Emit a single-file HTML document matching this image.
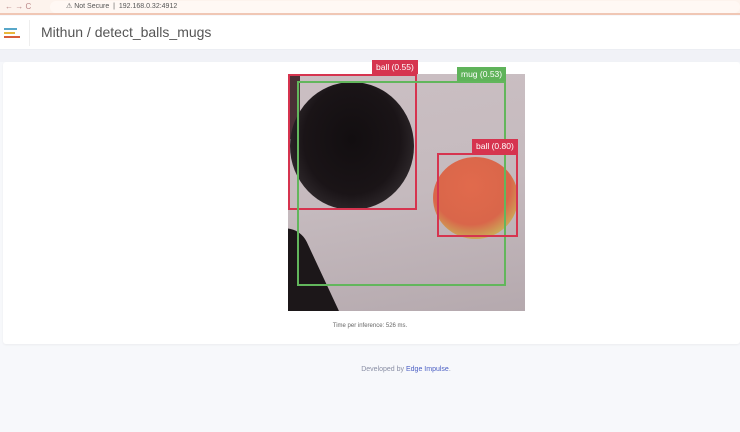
<!DOCTYPE html>
<html><head><meta charset="utf-8"><style>
*{margin:0;padding:0;box-sizing:border-box}
body{width:740px;height:432px;overflow:hidden;background:#f7f8fb;font-family:"Liberation Sans",sans-serif;position:relative}
.bar{position:absolute;left:0;top:0;width:740px;height:15px;background:#fdf3ed;border-bottom:2px solid #f0c7b5}
.url{position:absolute;left:50px;top:1px;height:12px;width:690px;background:#fff8f4;border-radius:6px;font-size:7px;color:#555;line-height:12px;padding-left:16px}
.hdr{position:absolute;left:0;top:16px;width:740px;height:34px;background:#fff;border-bottom:1px solid #eceef3}
.title{position:absolute;left:41px;top:8px;font-size:14px;color:#555}
.band{position:absolute;left:0;top:50px;width:740px;height:12px;background:#f1f2f7}
.card{position:absolute;left:3px;top:62px;width:737px;height:282px;background:#fff;border-radius:3px;box-shadow:0 1px 2px rgba(0,0,0,.05)}
.img{position:absolute;left:288px;top:74px;width:237px;height:237px;overflow:hidden;
background:linear-gradient(170deg,#cbbfc3 0%,#c5babe 50%,#b5a9ae 100%)}
.lbl{position:absolute;color:#fff;font-size:8.5px;line-height:14px;padding:0 4px;white-space:nowrap}
</style></head><body>
<div class="bar"><span style="position:absolute;left:5px;top:2px;font-size:8px;color:#b88">← → C</span><div class="url">⚠ Not Secure &nbsp;|&nbsp; 192.168.0.32:4912</div></div>
<div class="hdr">
 <div style="position:absolute;left:4px;top:12px;width:13px;height:2px;background:#58a7c9"></div>
 <div style="position:absolute;left:4px;top:16px;width:11px;height:2px;background:#e8b73c"></div>
 <div style="position:absolute;left:4px;top:20px;width:16px;height:2px;background:#d85d3a"></div>
 <div style="position:absolute;left:29px;top:4px;width:1px;height:26px;background:#eee"></div>
 <div class="title">Mithun / detect_balls_mugs</div>
</div>
<div class="band"></div>
<div class="card"></div>
<div class="img">
 <div style="position:absolute;left:-10px;top:-5px;width:22px;height:70px;background:#4a3036"></div>
 <div style="position:absolute;left:2px;top:8px;width:124px;height:128px;border-radius:50%;background:radial-gradient(ellipse at 50% 45%,#120e10 0%,#1a1417 55%,#2e282b 75%,#6b6367 90%,#a39a9e 100%)"></div>
 <div style="position:absolute;left:-30px;top:155px;width:65px;height:110px;border-radius:6px 24px 6px 6px;background:#1c1719;transform:rotate(-25deg)"></div>
 <div style="position:absolute;left:145px;top:83px;width:85px;height:82px;border-radius:50%;background:radial-gradient(circle at 45% 35%,#e16a4c 0%,#d9664a 55%,#c9b75a 80%,#b8b060 100%)"></div>
</div>
<div style="position:absolute;left:288px;top:74px;width:129px;height:136px;border:2px solid #d6344f"></div>
<div class="lbl" style="left:372px;top:60px;background:#d6344f">ball (0.55)</div>
<div style="position:absolute;left:297px;top:81px;width:209px;height:205px;border:2px solid #62b65c"></div>
<div class="lbl" style="left:457px;top:67px;background:#5fb35a">mug (0.53)</div>
<div style="position:absolute;left:437px;top:153px;width:81px;height:84px;border:2px solid #d6344f"></div>
<div class="lbl" style="left:472px;top:139px;background:#d6344f">ball (0.80)</div>
<div style="position:absolute;left:0;width:740px;top:323px;text-align:center;font-size:6px;color:#666">Time per inference: 526 ms.</div>
<div style="position:absolute;left:0;width:812px;top:366px;text-align:center;font-size:7px;color:#8a8fa5">Developed by <span style="color:#4b5fc4">Edge Impulse</span>.</div>
</body></html>
